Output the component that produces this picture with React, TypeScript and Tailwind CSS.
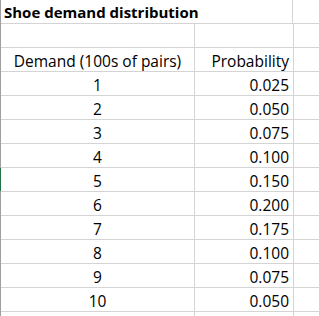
const rows: [string, string][] = [
  ["1", "0.025"],
  ["2", "0.050"],
  ["3", "0.075"],
  ["4", "0.100"],
  ["5", "0.150"],
  ["6", "0.200"],
  ["7", "0.175"],
  ["8", "0.100"],
  ["9", "0.075"],
  ["10", "0.050"],
];

export default function App() {
  return (
    <div
      className="flex h-[316px] w-[319px] overflow-hidden bg-white text-[15.5px] leading-[15px] text-black"
      style={{ fontFamily: "'Open Sans', Lato, sans-serif" }}
    >
      {/* row header edge */}
      <div className="flex w-[1px] shrink-0 flex-col bg-[#9e9e9e]">
        <div className="h-[168px]" />
        <div className="h-[23px] bg-[#217346]" />
      </div>

      <div className="flex flex-1 flex-col">
        {/* Title row */}
        <div className="flex h-[24px] shrink-0 border-b border-[#d4d4d4]">
          <div className="flex w-[292px] items-end border-r border-[#d4d4d4] pb-[3px] pl-[3px] text-[15px] font-bold whitespace-nowrap">
            Shoe demand distribution
          </div>
          <div className="flex-1" />
        </div>

        {/* Empty row */}
        <div className="flex h-[24px] shrink-0 border-b border-[#d4d4d4]">
          <div className="w-[194px] border-r border-[#d4d4d4]" />
          <div className="w-[99px] border-r border-[#d4d4d4]" />
          <div className="flex-1" />
        </div>

        {/* Header row */}
        <div className="flex h-[24px] shrink-0 border-b border-[#d4d4d4]">
          <div className="flex w-[194px] items-end justify-center border-r border-[#d4d4d4] pb-[2px] whitespace-nowrap">
            Demand (100s of pairs)
          </div>
          <div className="flex w-[99px] items-end justify-end border-r border-[#d4d4d4] pr-[4px] pb-[2px]">
            Probability
          </div>
          <div className="flex-1" />
        </div>

        {rows.map(([d, p]) => (
          <div key={d} className="flex h-[24px] shrink-0 border-b border-[#d4d4d4]">
            <div className="flex w-[194px] items-end justify-center border-r border-[#d4d4d4] pb-[2px]">
              {d}
            </div>
            <div className="flex w-[99px] items-end justify-end border-r border-[#d4d4d4] pr-[4px] pb-[2px]">
              {p}
            </div>
            <div className="flex-1" />
          </div>
        ))}

        <div className="flex flex-1">
          <div className="w-[194px] border-r border-[#d4d4d4]" />
          <div className="w-[99px] border-r border-[#d4d4d4]" />
        </div>
      </div>
    </div>
  );
}
